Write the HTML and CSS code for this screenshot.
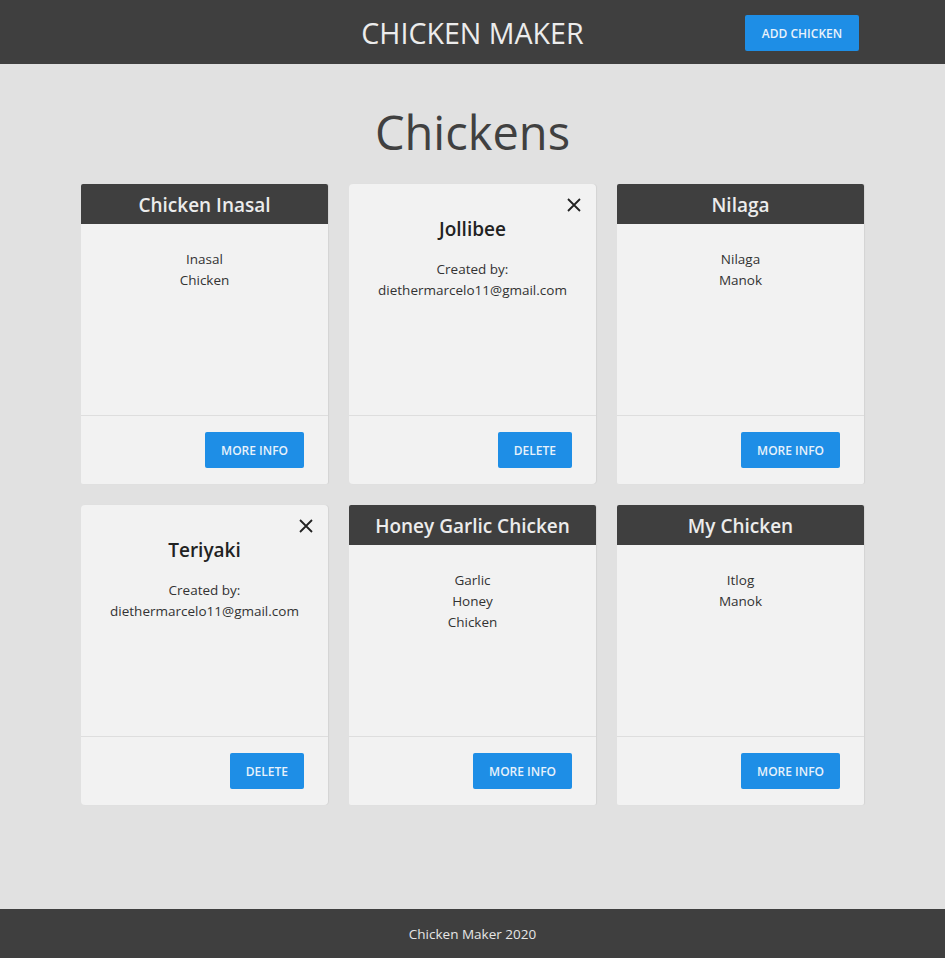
FILE: index.html
```html
<!DOCTYPE html>
<html>
<head>
<meta charset="utf-8">
<link rel="stylesheet" href="styles.css">
</head>
<body>
<header class="topbar">
  <h1 class="brand">CHICKEN MAKER</h1>
  <button class="btn btn-add">ADD CHICKEN</button>
</header>
<main class="main">
  <h2 class="page-title">Chickens</h2>
  <div class="grid">
    <div class="card">
      <div class="card-head">Chicken Inasal</div>
      <div class="card-body"><p>Inasal</p><p>Chicken</p></div>
      <div class="card-foot"><button class="btn">MORE INFO</button></div>
    </div>
    <div class="card own">
      <button class="close" aria-label="close"><svg width="14" height="14" viewBox="0 0 14 14"><path d="M1 1L13 13M13 1L1 13" stroke="#222" stroke-width="1.8" fill="none"/></svg></button>
      <div class="card-body"><h3 class="own-title">Jollibee</h3><p class="by">Created by:</p><p>diethermarcelo11@gmail.com</p></div>
      <div class="card-foot"><button class="btn">DELETE</button></div>
    </div>
    <div class="card">
      <div class="card-head">Nilaga</div>
      <div class="card-body"><p>Nilaga</p><p>Manok</p></div>
      <div class="card-foot"><button class="btn">MORE INFO</button></div>
    </div>
    <div class="card own">
      <button class="close" aria-label="close"><svg width="14" height="14" viewBox="0 0 14 14"><path d="M1 1L13 13M13 1L1 13" stroke="#222" stroke-width="1.8" fill="none"/></svg></button>
      <div class="card-body"><h3 class="own-title">Teriyaki</h3><p class="by">Created by:</p><p>diethermarcelo11@gmail.com</p></div>
      <div class="card-foot"><button class="btn">DELETE</button></div>
    </div>
    <div class="card">
      <div class="card-head">Honey Garlic Chicken</div>
      <div class="card-body"><p>Garlic</p><p>Honey</p><p>Chicken</p></div>
      <div class="card-foot"><button class="btn">MORE INFO</button></div>
    </div>
    <div class="card">
      <div class="card-head">My Chicken</div>
      <div class="card-body"><p>Itlog</p><p>Manok</p></div>
      <div class="card-foot"><button class="btn">MORE INFO</button></div>
    </div>
  </div>
</main>
<footer class="footer">Chicken Maker 2020</footer>
</body>
</html>
```
FILE: styles.css
```css
* { box-sizing: border-box; }
html, body { margin: 0; padding: 0; }
body {
  font-family: "Open Sans", "Noto Sans", sans-serif;
  background: #e1e1e1;
  color: #333;
  min-height: 100vh;
  display: flex;
  flex-direction: column;
}
.topbar {
  height: 64px;
  background: #3f3f3f;
  display: flex;
  align-items: center;
  justify-content: center;
  position: relative;
}
.brand {
  margin: 0;
  font-weight: 400;
  font-size: 28.6px;
  color: #ececec;
}
.btn {
  font-family: inherit;
  background: #1e8ee6;
  color: #e8f2fb;
  border: none;
  border-radius: 2px;
  height: 36px;
  padding: 0 16px;
  font-size: 12px;
  font-weight: 600;
  cursor: pointer;
}
.btn-add {
  position: absolute;
  left: 745px;
  top: 15px;
  width: 114px;
  padding: 0;
}
.main {
  flex: 1;
  display: flex;
  flex-direction: column;
  align-items: center;
}
.page-title {
  margin: 38px 0 22px;
  height: 60px;
  line-height: 60px;
  font-size: 47px;
  font-weight: 400;
  color: #404040;
}
.grid {
  display: grid;
  grid-template-columns: repeat(3, 247px);
  grid-auto-rows: 300px;
  gap: 21px;
  margin-bottom: 40px;
}
.card {
  background: #f2f2f2;
  border-radius: 2px;
  box-shadow: 1px 0 1px rgba(0,0,0,0.06);
  display: flex;
  flex-direction: column;
  position: relative;
  overflow: hidden;
}
.card.own { border-radius: 4px; }
.card-head {
  height: 40px;
  padding-top: 2px;
  background: #3f3f3f;
  color: #ececec;
  font-size: 19px;
  font-weight: 600;
  display: flex;
  align-items: center;
  justify-content: center;
}
.card-body {
  flex: 1;
  text-align: center;
  padding-top: 25px;
  font-size: 13.5px;
  line-height: 21px;
  color: #333;
}
.card-body p { margin: 0; }
.own .card-body { padding-top: 31px; }
.own-title {
  margin: 0 0 16px;
  font-size: 19px;
  line-height: 28px;
  font-weight: 600;
  color: #222;
}
.close {
  position: absolute;
  top: 14px;
  right: 15px;
  background: none;
  border: none;
  padding: 0;
  width: 14px;
  height: 14px;
  cursor: pointer;
}
.close svg { display: block; }
.card-foot {
  height: 69px;
  border-top: 1px solid #dedede;
  display: flex;
  align-items: center;
  justify-content: flex-end;
  padding-right: 24px;
}
.footer {
  height: 49px;
  background: #3f3f3f;
  color: #e6e6e6;
  font-size: 13.5px;
  display: flex;
  align-items: center;
  justify-content: center;
}
```
